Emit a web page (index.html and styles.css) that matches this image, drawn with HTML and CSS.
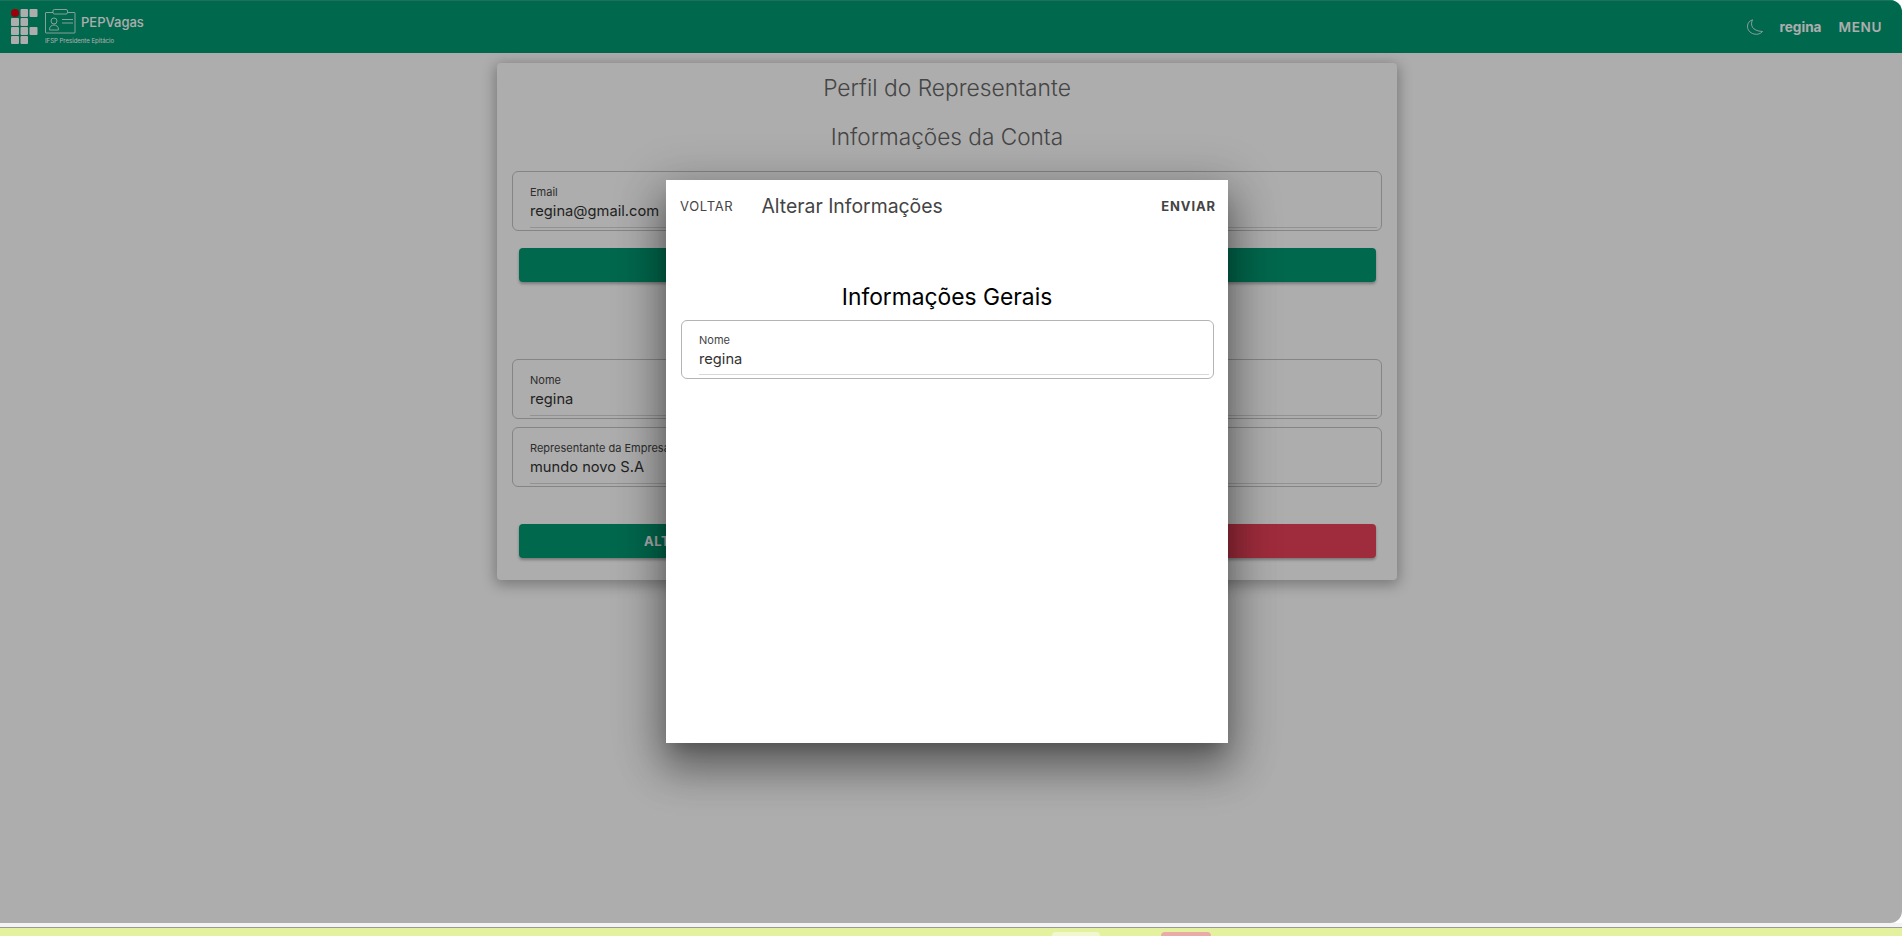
FILE: index.html
```html
<!DOCTYPE html>
<html lang="pt-BR">
<head>
    <meta charset="UTF-8">
    <meta name="viewport" content="width=device-width, initial-scale=1.0">
    <title>PEPVagas - Perfil do Representante</title>
    <link rel="stylesheet" href="styles.css">
</head>
<body>
    <div class="screen">
        <header class="navbar">
            <div class="brand">
                <svg class="if-logo" width="27" height="36" viewBox="0 0 27 36">
                    <circle cx="4" cy="4" r="4" fill="#e3000f"/>
                    <rect x="9.5" width="7.5" height="8" rx="1" fill="#fff"/>
                    <rect x="18.5" width="8" height="8" rx="1" fill="#fff"/>
                    <rect y="9" width="8" height="8" rx="1" fill="#fff"/>
                    <rect x="9.5" y="9" width="7.5" height="8" rx="1" fill="#fff"/>
                    <rect y="18" width="8" height="8" rx="1" fill="#fff"/>
                    <rect x="9.5" y="18" width="7.5" height="8" rx="1" fill="#fff"/>
                    <rect x="18.5" y="18" width="8" height="8" rx="1" fill="#fff"/>
                    <rect y="27" width="8" height="8" rx="1" fill="#fff"/>
                    <rect x="9.5" y="27" width="7.5" height="8" rx="1" fill="#fff"/>
                </svg>
                <div class="brand-text">
                    <div class="brand-top">
                        <svg class="badge-icon" width="31" height="25" viewBox="0 0 31 25" fill="none" stroke="#fff" stroke-width="0.8">
                            <rect x="0.5" y="3.5" width="29.5" height="20.5" rx="0.5"/>
                            <rect x="8" y="0.5" width="14.5" height="4.5" rx="1.5" fill="#009a72"/>
                            <circle cx="9" cy="12" r="3"/>
                            <path d="M4.5 20.5c0-6 9-6 9 0v0.5h-9z"/>
                            <path d="M17 10.5h11M17 14h11"/>
                        </svg>
                        <span class="brand-name">PEPVagas</span>
                    </div>
                    <div class="brand-sub">IFSP Presidente Epitácio</div>
                </div>
            </div>
            <div class="nav-right">
                <svg width="16" height="16" viewBox="0 0 16 16" fill="none" stroke="#fff" stroke-width="0.8">
                    <path d="M5.5 0.8C3 6 5 12 15.5 12.5C13.5 15 10 15.8 7 15C2.5 13.8 0.3 10.5 0.5 7C0.6 4 2.5 1.8 5.5 0.8z"/>
                </svg>
                <span class="nav-user">regina</span>
                <span class="nav-menu">MENU</span>
            </div>
        </header>

        <main class="card">
            <h2 class="card-title">Perfil do Representante</h2>
            <h2 class="card-title section-first">Informações da Conta</h2>
            <div class="field">
                <label>Email</label>
                <div class="field-value">regina@gmail.com</div>
            </div>
            <button class="btn btn-green btn-email">ALTERAR EMAIL</button>
            <div class="field section-second">
                <label>Nome</label>
                <div class="field-value">regina</div>
            </div>
            <div class="field field-next">
                <label>Representante da Empresa</label>
                <div class="field-value">mundo novo S.A</div>
            </div>
            <div class="btn-row">
                <button class="btn btn-green">ALTERAR INFORMAÇÕES</button>
                <button class="btn btn-red"></button>
            </div>
        </main>

        <div class="overlay">
            <div class="modal">
                <div class="modal-bar">
                    <button class="bar-btn">VOLTAR</button>
                    <span class="modal-title">Alterar Informações</span>
                    <button class="bar-btn bar-send">ENVIAR</button>
                </div>
                <h3 class="modal-heading">Informações Gerais</h3>
                <div class="field modal-field">
                    <label>Nome</label>
                    <div class="field-value">regina</div>
                </div>
            </div>
        </div>
    </div>

    <div class="strip"></div>
    <div class="lime-bar">
        <span class="tab tab-pale"></span>
        <span class="tab tab-pink"></span>
    </div>
</body>
</html>
```

FILE: styles.css
```css
* {
    box-sizing: border-box;
}
html, body {
    height: 100%;
}
body {
    margin: 0;
    height: 936px;
    overflow: hidden;
    background-color: #fff;
    font-family: Inter, "Liberation Sans", sans-serif;
    color: #212121;
    display: flex;
    flex-direction: column;
}
.screen {
    position: relative;
    height: 923px;
    flex: none;
    overflow: hidden;
    background-color: #fff;
    border-radius: 0 12px 12px 0;
}
.navbar {
    height: 53px;
    background-color: #009a72;
    border-top: 1px solid #2aa987;
    color: #fff;
    display: flex;
    align-items: center;
    justify-content: space-between;
    padding: 0 20px 0 11px;
}
.brand {
    display: flex;
    align-items: flex-start;
    gap: 7px;
}
.brand-top {
    display: flex;
    align-items: center;
    gap: 5px;
    height: 25px;
}
.brand-name {
    font-size: 13px;
    font-weight: 500;
}
.brand-sub {
    font-size: 6px;
    line-height: 9px;
    margin-top: 2px;
}
.nav-right {
    display: flex;
    align-items: center;
}
.nav-user {
    font-size: 13.6px;
    font-weight: 700;
    margin-left: 17px;
}
.nav-menu {
    font-size: 13.6px;
    font-weight: 600;
    letter-spacing: 0.6px;
    margin-left: 17px;
}
.card {
    width: 900px;
    height: 517px;
    margin: 10px 0 0 497px;
    padding: 10px 15px 0;
    background-color: #fff;
    border-radius: 4px;
    box-shadow: 0 3px 14px 2px rgba(0, 0, 0, 0.3);
}
.card-title {
    margin: 0;
    font-size: 22.8px;
    line-height: 30px;
    font-weight: 300;
    text-align: center;
    color: #666;
}
.section-first {
    font-size: 22.6px;
    margin-top: 19px;
    margin-bottom: 19px;
}
.section-second {
    margin-top: 77px;
}
.field {
    height: 60px;
    padding: 12px 4px 0 17px;
    border: 1px solid #c4c4c4;
    border-radius: 6px;
}
.field-next {
    margin-top: 8px;
}
.field label {
    display: block;
    font-size: 11px;
    line-height: 16px;
    color: #444;
}
.field-value {
    font-size: 14.7px;
    line-height: 23px;
    padding-bottom: 4px;
    color: #333;
    border-bottom: 1px solid #d8d8d8;
}
.btn {
    display: block;
    width: 100%;
    height: 34px;
    border: none;
    border-radius: 4px;
    color: #fff;
    font-family: inherit;
    font-size: 13px;
    font-weight: 700;
    letter-spacing: 0.5px;
    box-shadow: 0 2px 3px rgba(0, 0, 0, 0.3);
}
.btn-green {
    background-color: #009a72;
}
.btn-red {
    background-color: #ea4259;
}
.btn-email {
    width: 857px;
    margin: 17px 0 0 7px;
}
.btn-row {
    display: flex;
    gap: 19px;
    margin: 37px 6px 0 7px;
}
.overlay {
    position: absolute;
    inset: 0;
    background-color: rgba(0, 0, 0, 0.32);
}
.modal {
    position: absolute;
    top: 180px;
    left: 666px;
    width: 562px;
    height: 563px;
    background-color: #fff;
    box-shadow: 0 11px 15px -7px rgba(0, 0, 0, 0.2), 0 24px 38px 3px rgba(0, 0, 0, 0.34), 0 9px 46px 8px rgba(0, 0, 0, 0.18);
}
.modal-bar {
    display: flex;
    align-items: center;
    height: 51px;
    padding: 0 12px 0 14px;
}
.bar-btn {
    padding: 0;
    border: none;
    background: none;
    font-family: inherit;
    font-size: 13px;
    font-weight: 400;
    letter-spacing: 0.7px;
    color: #444;
}
.bar-send {
    margin-left: auto;
    font-weight: 700;
    letter-spacing: 0.9px;
}
.modal-title {
    margin-left: 28px;
    font-size: 19.4px;
    color: #444;
}
.modal-heading {
    margin: 51px 0 9px;
    font-size: 22.8px;
    line-height: 29px;
    font-weight: 400;
    text-align: center;
    color: #000;
}
.modal-field {
    width: 533px;
    height: 59px;
    margin-left: 15px;
    padding-top: 11px;
    border-color: #b4b4b4;
}
.modal-field .field-value {
    padding-bottom: 3px;
}
.strip {
    height: 4px;
    flex: none;
    background-color: #f4f4f4;
}
.lime-bar {
    flex: 1;
    display: flex;
    align-items: flex-end;
    overflow: hidden;
    background-color: #e4f2a0;
    border-top: 1px solid #9a9a9a;
    padding-left: 1052px;
}
.tab {
    display: block;
    height: 4px;
    border-radius: 4px 4px 0 0;
}
.tab-pale {
    width: 48px;
    background-color: #f2f7d0;
}
.tab-pink {
    width: 50px;
    margin-left: 61px;
    background-color: #e9aaa8;
}
```
